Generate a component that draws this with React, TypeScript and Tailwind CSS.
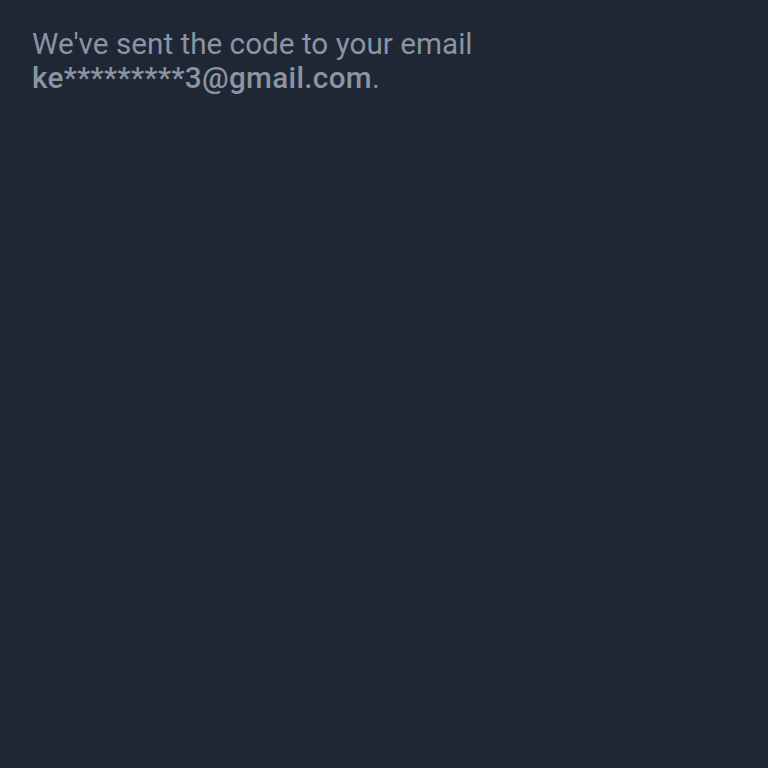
export default function App() {
  return (
    <div className="min-h-screen w-full bg-[#1e2733] px-8 pt-[27px] font-['Roboto',sans-serif]">
      <p className="text-[29.7px] leading-[34px] text-[#8a94a2]">
        We've sent the code to your email
        <br />
        <span className="font-medium tracking-[0.3px]">ke*********3@gmail.com</span>.
      </p>
    </div>
  );
}
